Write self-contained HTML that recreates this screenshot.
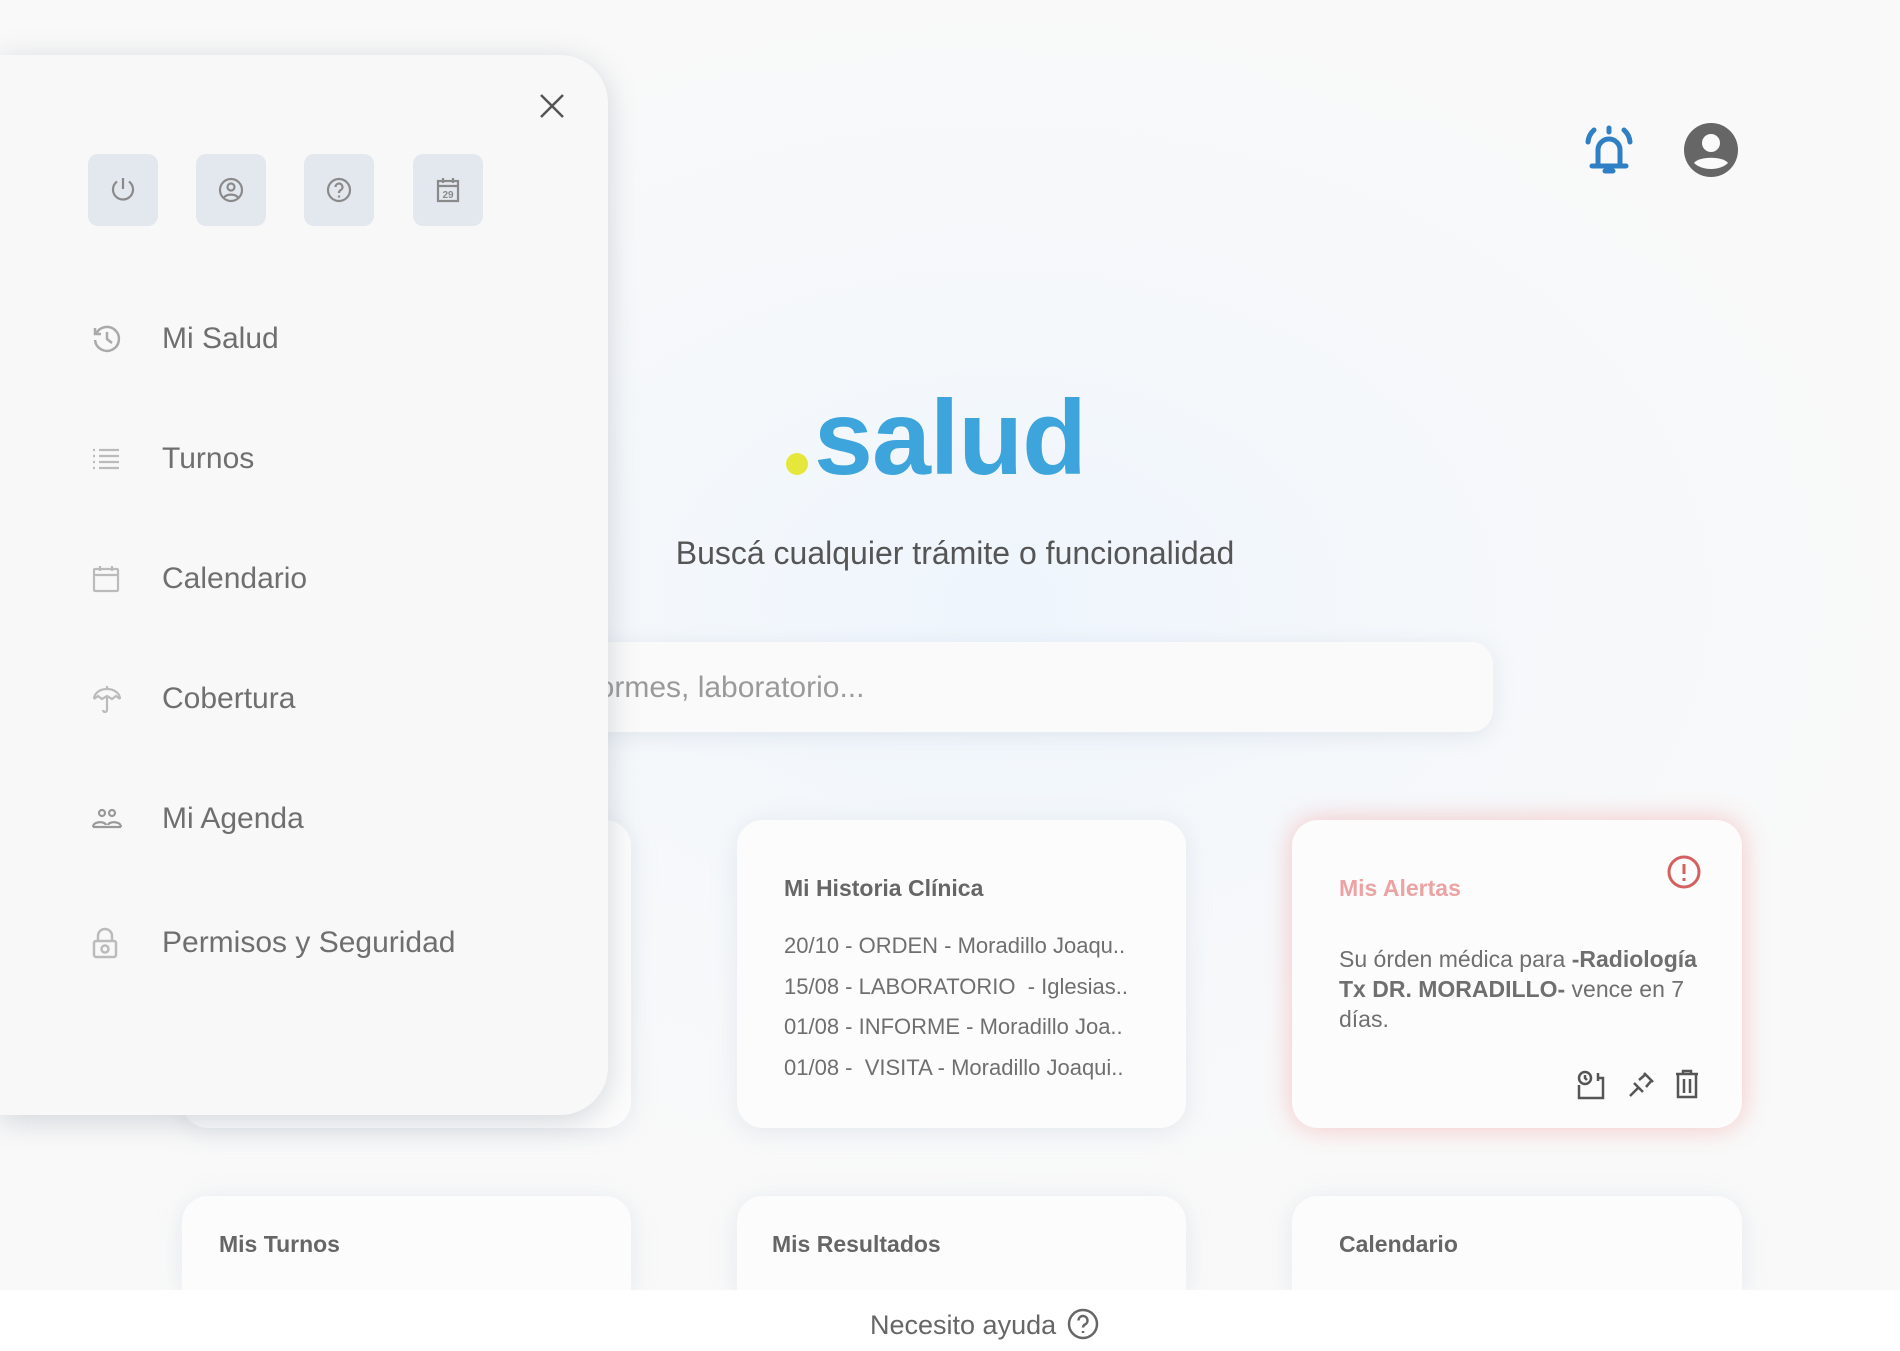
<!DOCTYPE html>
<html style="width:1900px;height:1351px;overflow:hidden"><head><meta charset="utf-8"><style>
*{box-sizing:border-box;margin:0;padding:0}
body{width:1900px;height:1351px;overflow:hidden;position:relative;font-family:"Liberation Sans",sans-serif;color:#707070;
background:radial-gradient(ellipse 900px 600px at 1000px 600px,#eef5fc 0%,#f5f8fb 50%,#f9f9f9 100%);}
.abs{position:absolute}
.card{position:absolute;background:#fcfcfc;border-radius:26px;box-shadow:0 4px 24px rgba(190,200,215,.35)}
.side{left:0;top:55px;width:608px;height:1060px;background:#f8f8f8;border-radius:0 48px 48px 0;box-shadow:0 6px 30px rgba(120,130,145,.3);z-index:5}
.btn{position:absolute;top:99px;width:70px;height:72px;background:#e3e7ee;border-radius:10px;display:flex;align-items:center;justify-content:center}
.mi{position:absolute;left:0;height:50px;display:flex;align-items:center;font-size:30px;color:#6f6f6f}
.mi svg{position:absolute;left:92px}
.mi span{position:absolute;left:162px;white-space:nowrap}
.ct{font-weight:bold;font-size:23px;color:#666}
.ln{font-size:22px;color:#6f6f6f;position:absolute;left:47px;white-space:nowrap}
</style></head><body>

<svg class="abs" style="left:1580px;top:120px" width="58" height="58" viewBox="0 0 58 58" fill="none" stroke="#2e7fc4" stroke-width="5" stroke-linecap="round">
<path d="M29 8v4M18 46V30a11 11 0 0 1 22 0v16M12 46h34M25 51h8"/>
<path d="M8 22a18 18 0 0 1 6-12M50 22a18 18 0 0 0-6-12"/></svg>
<svg class="abs" style="left:1684px;top:123px" width="54" height="54" viewBox="0 0 54 54"><circle cx="27" cy="27" r="27" fill="#666"/><circle cx="27" cy="20" r="9" fill="#fafafa"/><path d="M10 40c5-7 29-7 34 0-8 8-26 8-34 0z" fill="#fafafa"/></svg>

<div class="abs" style="left:797px;top:464px;width:22px;height:22px;border-radius:50%;background:#e5e83a;transform:translate(-11px,-11px)"></div>
<div class="abs" style="left:814px;top:380px;font-size:106px;font-weight:bold;color:#3ea4dc;letter-spacing:-1px;line-height:1.1">salud</div>
<div class="abs" style="left:600px;top:535px;width:710px;text-align:center;font-size:32px;color:#555">Buscá cualquier trámite o funcionalidad</div>

<div class="abs" style="left:415px;top:642px;width:1078px;height:90px;background:#fafafa;border-radius:22px;box-shadow:0 4px 20px rgba(190,200,215,.35)"></div>
<div class="abs" style="left:566px;top:671px;font-size:30px;color:#9a9a9a">informes, laboratorio...</div>

<div class="card" style="left:182px;top:820px;width:449px;height:308px"></div>
<div class="card" style="left:737px;top:820px;width:449px;height:308px">
 <div class="ct abs" style="left:47px;top:55px">Mi Historia Clínica</div>
 <div class="ln" style="top:113px">20/10 - ORDEN - Moradillo Joaqu..</div>
 <div class="ln" style="top:154px">15/08 - LABORATORIO&nbsp; - Iglesias..</div>
 <div class="ln" style="top:194px">01/08 - INFORME - Moradillo Joa..</div>
 <div class="ln" style="top:235px">01/08 -&nbsp; VISITA - Moradillo Joaqui..</div>
</div>
<div class="card" style="left:1292px;top:820px;width:450px;height:308px;box-shadow:0 0 26px rgba(240,130,130,.45)">
 <div class="ct abs" style="left:47px;top:55px;color:#eba3a3">Mis Alertas</div>
 <svg class="abs" style="left:375px;top:35px" width="34" height="34" viewBox="0 0 34 34" fill="none" stroke="#d46060" stroke-width="3"><circle cx="17" cy="17" r="15"/><path d="M17 9v10M17 23v3"/></svg>
 <div class="abs" style="left:47px;top:124px;width:362px;font-size:23px;line-height:30px;color:#6f6f6f">Su órden médica para <b>-Radiología Tx DR. MORADILLO-</b> vence en 7 días.</div>
 <svg class="abs" style="left:284px;top:250px" width="32" height="30" viewBox="0 0 32 30" fill="none" stroke="#555" stroke-width="2.5"><circle cx="9" cy="8" r="6"/><path d="M9 5v3l2 2M3 15v13h24V8h-5M22 3v8"/></svg>
 <svg class="abs" style="left:335px;top:251px" width="28" height="28" viewBox="0 0 28 28" fill="none" stroke="#555" stroke-width="2.5"><path d="M17 2l9 9M3 25l9-9M7 12l9 9M12 9l7-6M19 16l6-7"/></svg>
 <svg class="abs" style="left:382px;top:249px" width="26" height="30" viewBox="0 0 26 30" fill="none" stroke="#555" stroke-width="2.5"><path d="M2 5h22M9 5V2h8v3M4 5v23h18V5M10 10v14M16 10v14"/></svg>
</div>

<div class="card" style="left:182px;top:1196px;width:449px;height:94px;border-radius:26px 26px 0 0"><div class="ct abs" style="left:37px;top:35px">Mis Turnos</div></div>
<div class="card" style="left:737px;top:1196px;width:449px;height:94px;border-radius:26px 26px 0 0"><div class="ct abs" style="left:35px;top:35px">Mis Resultados</div></div>
<div class="card" style="left:1292px;top:1196px;width:450px;height:94px;border-radius:26px 26px 0 0"><div class="ct abs" style="left:47px;top:35px">Calendario</div></div>

<div class="abs" style="left:0;top:1290px;width:1900px;height:61px;background:#fff;z-index:3"></div>
<div class="abs" style="left:870px;top:1310px;font-size:27px;color:#666;z-index:4;white-space:nowrap">Necesito ayuda</div>
<svg class="abs" style="left:1067px;top:1308px;z-index:4" width="32" height="32" viewBox="0 0 32 32" fill="none" stroke="#666" stroke-width="2.5"><circle cx="16" cy="16" r="14"/><path d="M11.5 12.5a4.5 4.5 0 1 1 6.5 4c-1.5.8-2 1.5-2 3M16 23v2"/></svg>

<div class="abs side">
 <svg class="abs" style="left:539px;top:38px" width="26" height="26" viewBox="0 0 26 26" stroke="#555" stroke-width="2.5"><path d="M2 2l22 22M24 2L2 24"/></svg>
 <div class="btn" style="left:88px"><svg width="30" height="30" viewBox="0 0 30 30" fill="none" stroke="#8a8a8a" stroke-width="2.2"><path d="M15 3v11M9 6.5a10 10 0 1 0 12 0"/></svg></div>
 <div class="btn" style="left:196px"><svg width="30" height="30" viewBox="0 0 30 30" fill="none" stroke="#8a8a8a" stroke-width="2.2"><circle cx="15" cy="15" r="11"/><circle cx="15" cy="12" r="3.5"/><path d="M7.5 23c3-4.5 12-4.5 15 0"/></svg></div>
 <div class="btn" style="left:304px"><svg width="30" height="30" viewBox="0 0 30 30" fill="none" stroke="#8a8a8a" stroke-width="2.2"><circle cx="15" cy="15" r="11"/><path d="M11.5 12a3.5 3.5 0 1 1 5 3.2c-1 .6-1.5 1.2-1.5 2.8M15 20.5v2"/></svg></div>
 <div class="btn" style="left:413px"><svg width="28" height="30" viewBox="0 0 28 30" fill="none" stroke="#8a8a8a" stroke-width="2.2"><rect x="4" y="6" width="20" height="20"/><path d="M4 11h20M9 3v5M19 3v5"/><text x="14" y="23" font-size="10" font-weight="bold" text-anchor="middle" fill="#8a8a8a" stroke="none" font-family="Liberation Sans">29</text></svg></div>

 <div class="mi" style="top:259px"><svg width="30" height="30" viewBox="0 0 30 30" fill="none" stroke="#aaa" stroke-width="2.5"><path d="M4 10a12 12 0 1 1-1 6M3 4v6h6M15 8v7l5 4"/></svg><span>Mi Salud</span></div>
 <div class="mi" style="top:379px"><svg width="28" height="24" viewBox="0 0 28 24" fill="none" stroke="#bbb" stroke-width="2.2"><path d="M1 3h2M1 9h2M1 15h2M1 21h2M7 3h20M7 9h20M7 15h20M7 21h20"/></svg><span>Turnos</span></div>
 <div class="mi" style="top:499px"><svg width="28" height="28" viewBox="0 0 28 28" fill="none" stroke="#bbb" stroke-width="2.2"><rect x="2" y="4" width="24" height="22" rx="1"/><path d="M2 10h24M8 1v5M20 1v5"/></svg><span>Calendario</span></div>
 <div class="mi" style="top:619px"><svg width="30" height="30" viewBox="0 0 30 30" fill="none" stroke="#bbb" stroke-width="2.2"><path d="M15 2v3M2 15a13 10 0 0 1 26 0M2 15l4-3 4 3 5-3 5 3 4-3 4 3M15 12v14a2 2 0 0 1-4 0"/></svg><span>Cobertura</span></div>
 <div class="mi" style="top:739px"><svg width="30" height="24" viewBox="0 0 30 24" fill="none" stroke="#999" stroke-width="2.2"><circle cx="10" cy="6" r="3"/><circle cx="20" cy="6" r="3"/><path d="M1 20c0-6 12-6 13-2M16 18c1-4 13-4 13 2M1 20h28"/></svg><span>Mi Agenda</span></div>
 <div class="mi" style="top:863px"><svg width="26" height="32" viewBox="0 0 26 32" fill="none" stroke="#bbb" stroke-width="2.5"><path d="M6 14V9a7 7 0 0 1 14 0v5"/><rect x="2" y="14" width="22" height="16" rx="2"/><circle cx="13" cy="22" r="3.5"/></svg><span>Permisos y Seguridad</span></div>
</div>
</body></html>
